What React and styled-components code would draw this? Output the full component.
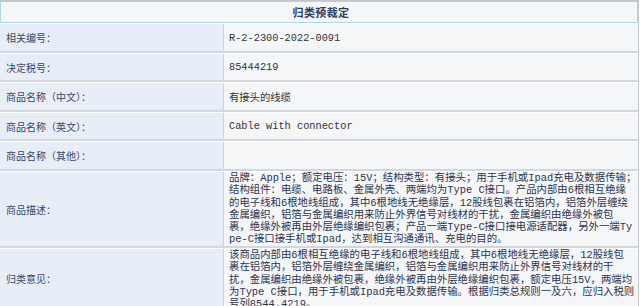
import React from 'react';
import styled, { createGlobalStyle } from 'styled-components';

const GlobalStyle = createGlobalStyle`
    html, body {
        margin: 0;
        padding: 0;
        background: #ffffff;
        overflow: hidden;
    }
`;

const rows = [
    { label: '相关编号：', value: 'R-2-2300-2022-0091', h: 30 },
    { label: '决定税号：', value: '85444219', h: 29 },
    { label: '商品名称（中文）：', value: '有接头的线缆', h: 30 },
    { label: '商品名称（英文）：', value: 'Cable with connector', h: 29 },
    { label: '商品名称（其他）：', value: '', h: 30 },
];

const description = [
    '品牌：Apple；额定电压：15V；结构类型：有接头；用于手机或Ipad充电及数据传输；',
    '结构组件：电缆、电路板、金属外壳、两端均为Type C接口。产品内部由6根相互绝缘',
    '的电子线和6根地线组成，其中6根地线无绝缘层，12股线包裹在铝箔内，铝箔外层缠绕',
    '金属编织，铝箔与金属编织用来防止外界信号对线材的干扰，金属编织由绝缘外被包',
    '裹，绝缘外被再由外层绝缘编织包裹；产品一端Type-C接口接电源适配器，另外一端Ty',
    'pe-C接口接手机或Ipad，达到相互沟通通讯、充电的目的。',
];

const opinion = [
    '该商品内部由6根相互绝缘的电子线和6根地线组成，其中6根地线无绝缘层，12股线包',
    '裹在铝箔内，铝箔外层缠绕金属编织，铝箔与金属编织用来防止外界信号对线材的干',
    '扰，金属编织由绝缘外被包裹，绝缘外被再由外层绝缘编织包裹，额定电压15V，两端均',
    '为Type C接口，用于手机或Ipad充电及数据传输。根据归类总规则一及六，应归入税则',
    '号列8544.4219。',
];

function App () {

    return(
        <>
            <GlobalStyle />
            <Table>
                <Header>归类预裁定</Header>
                {rows.map((r) => (
                    <Row key={r.label} $h={r.h}>
                        <Label>{r.label}</Label>
                        <Value>{r.value}</Value>
                    </Row>
                ))}
                <Row $h={77}>
                    <Label>商品描述：</Label>
                    <Text>
                        {description.map((line) => <Line key={line}>{line}</Line>)}
                    </Text>
                </Row>
                <Row $h={70}>
                    <Label $lift={8}>归类意见：</Label>
                    <Text>
                        {opinion.map((line) => <Line key={line}>{line}</Line>)}
                    </Text>
                </Row>
            </Table>
        </>
    )
};

const Table = styled.div`
    width: 639px;
    border-top: 1px solid #c4c7cb;
    border-right: 1px solid #c4c7cb;
    box-sizing: border-box;
    font-family: "Noto Sans CJK SC", sans-serif;
`

const Header = styled.div`
    height: 22px;
    box-sizing: border-box;
    border: 1px solid #a9d6ea;
    background-color: #f5f6f8;
    display: flex;
    align-items: center;
    justify-content: center;
    padding-left: 4px;
    font-size: 11px;
    font-weight: bold;
    color: #2c3f66;
    letter-spacing: 0.4px;
`

const Row = styled.div`
    display: grid;
    grid-template-columns: 224px 1fr;
    height: ${(p) => p.$h}px;
    box-sizing: border-box;
    border-top: 1px solid #ffffff;
    border-bottom: 2px solid #d3d7dc;
`

const Label = styled.div`
    display: flex;
    align-items: center;
    padding-left: 6px;
    padding-bottom: ${(p) => p.$lift || 0}px;
    background-color: #e7eef7;
    border-right: 1px solid #cfd3d8;
    font-size: 10px;
    color: #34486c;
`

const Value = styled.div`
    display: flex;
    align-items: center;
    padding-left: 5px;
    background-color: #f5f6f8;
    font-family: "Liberation Mono", "Noto Sans CJK SC", monospace;
    font-size: 10.3px;
    color: #333333;
    white-space: nowrap;
`

const Text = styled.div`
    padding: 0 0 0 5px;
    background-color: #f5f6f8;
    font-family: "Liberation Mono", "Noto Sans CJK SC", monospace;
    font-size: 10.4px;
    line-height: 12.3px;
    color: #2b3450;
    overflow: hidden;
`

const Line = styled.div`
    white-space: nowrap;
`

export default App;
